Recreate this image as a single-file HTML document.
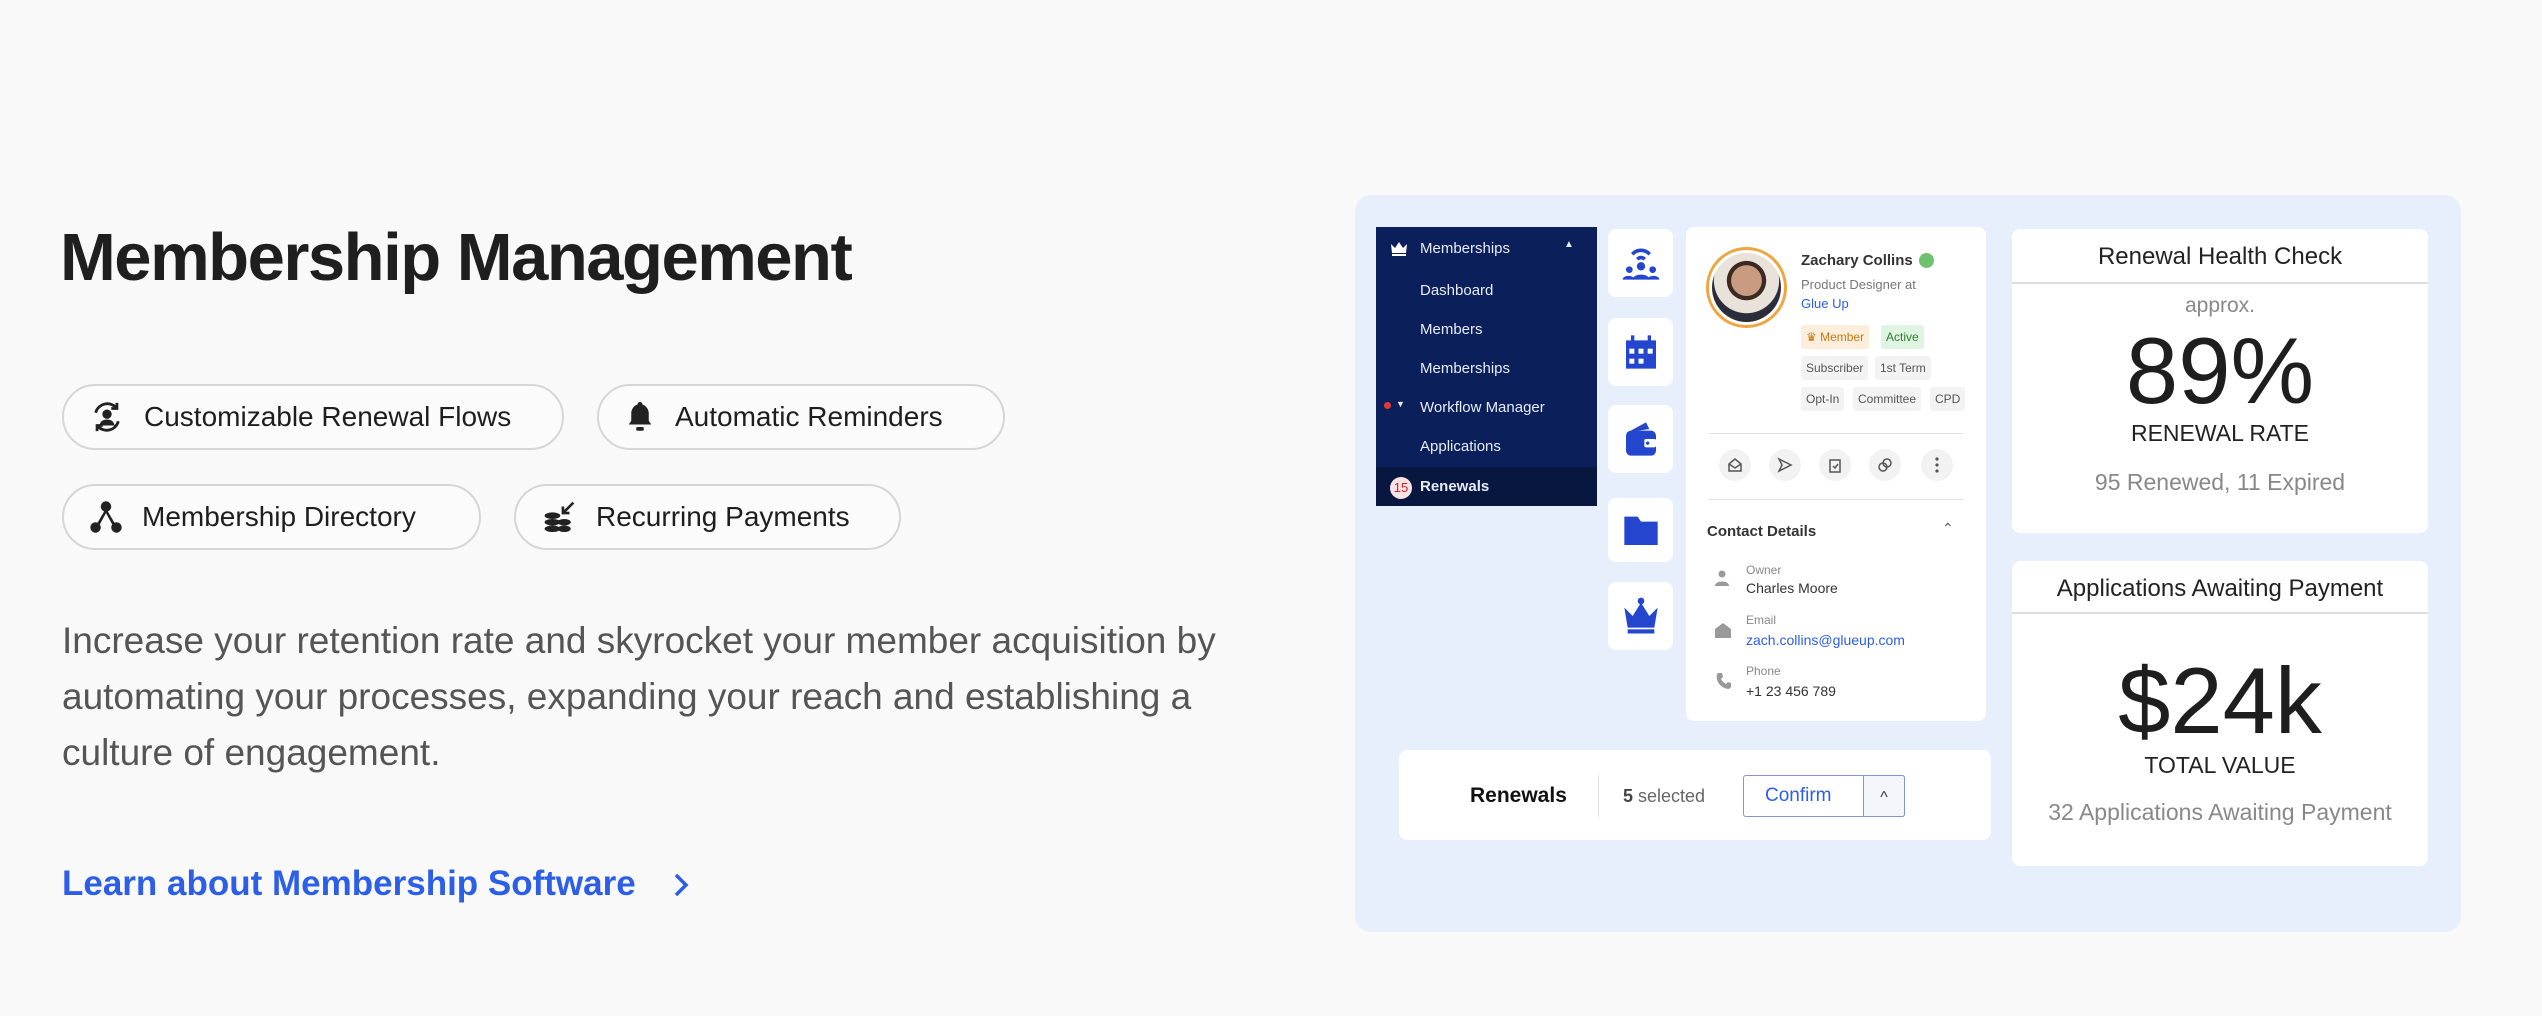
<!DOCTYPE html>
<html><head><meta charset="utf-8"><style>
*{margin:0;padding:0;box-sizing:border-box}
body{width:2542px;height:1016px;background:#f9f9f9;font-family:"Liberation Sans",sans-serif;position:relative;overflow:hidden;color:#222}
.a{position:absolute;white-space:nowrap}
.chip{position:absolute;height:66px;border:2px solid #d6d6d6;border-radius:33px;background:#fbfbfb;font-size:28px;color:#1e1e1e;display:flex;align-items:center;padding-left:26px}
.chip svg{margin-right:20px}
.panel{position:absolute;left:1355px;top:195px;width:1106px;height:737px;background:#e7eefc;border-radius:16px}
.side{position:absolute;left:1376px;top:227px;width:221px;height:279px;background:#0b1f5a}
.side div{position:absolute;left:44px;color:#e8ecf7;font-size:15px}
.tile{position:absolute;left:1608px;width:65px;background:#fff;border-radius:8px;display:flex;align-items:center;justify-content:center}
.card{position:absolute;background:#fff;border-radius:8px}
.tag{position:absolute;height:24px;line-height:24px;font-size:12px;padding:0 5px;border-radius:3px;background:#f3f3f3;color:#555}
.act{position:absolute;top:449px;width:32px;height:32px;border-radius:16px;background:#f2f2f2;display:flex;align-items:center;justify-content:center}
.lbl{position:absolute;left:1746px;font-size:12px;color:#888}
.val{position:absolute;left:1746px;font-size:14px;color:#333}
.c{text-align:center;position:absolute;left:0;width:100%}
</style></head><body>

<div class="a" style="left:60px;top:219px;font-size:67px;font-weight:bold;letter-spacing:-1.5px;color:#1f1f1f">Membership Management</div>

<div class="chip" style="left:62px;top:384px;width:502px">
<svg width="34" height="34" viewBox="0 0 24 24" fill="none" stroke="#222" stroke-width="2"><path d="M4 9a8.5 8.5 0 0 1 15-3"/><path d="M20 15a8.5 8.5 0 0 1-15 3"/><path d="M19 2v4h-4M5 22v-4h4"/><circle cx="12" cy="10" r="2.3" fill="#222"/><path d="M8 17c1-3 7-3 8 0z" fill="#222"/></svg>Customizable Renewal Flows</div>
<div class="chip" style="left:597px;top:384px;width:408px">
<svg width="30" height="34" viewBox="0 0 24 26" fill="#222"><path d="M12 1a2 2 0 0 1 2 2c3 1 5 4 5 7v6l2 3H3l2-3v-6c0-3 2-6 5-7a2 2 0 0 1 2-2z"/><rect x="9" y="21" width="6" height="3" rx="1"/></svg>Automatic Reminders</div>
<div class="chip" style="left:62px;top:484px;width:419px">
<svg width="32" height="34" viewBox="0 0 24 26" fill="#222"><circle cx="12" cy="5" r="4"/><circle cx="4" cy="21" r="4"/><circle cx="20" cy="21" r="4"/><path d="M11 8 4 20l2 1 6-11 6 11 2-1-7-12z"/></svg>Membership Directory</div>
<div class="chip" style="left:514px;top:484px;width:387px">
<svg width="34" height="34" viewBox="0 0 26 26" fill="#222"><ellipse cx="8" cy="12" rx="6" ry="2.5"/><ellipse cx="8" cy="17" rx="6" ry="2.5"/><ellipse cx="8" cy="22" rx="6" ry="2.5"/><ellipse cx="17" cy="17" rx="5" ry="2.5"/><ellipse cx="17" cy="22" rx="5" ry="2.5"/><path d="M24 2 16 10M16 5v5h5" stroke="#222" stroke-width="2" fill="none"/></svg>Recurring Payments</div>

<div class="a" style="left:62px;top:613px;font-size:37px;line-height:56px;color:#555;white-space:normal;width:1300px">Increase your retention rate and skyrocket your member acquisition by<br>automating your processes, expanding your reach and establishing a<br>culture of engagement.</div>

<div class="a" style="left:62px;top:864px;font-size:35px;font-weight:bold;color:#2c5ee8">Learn about Membership Software</div>
<svg class="a" style="left:672px;top:872px" width="18" height="26" viewBox="0 0 18 26"><path d="M4 3l10 10-10 10" stroke="#2c5ee8" stroke-width="3.5" fill="none"/></svg>

<div class="panel"></div>

<div class="side">
<svg style="position:absolute;left:14px;top:14px" width="18" height="15" viewBox="0 0 18 15" fill="#fff"><path d="M1 3l4 4 4-6 4 6 4-4-1 9H2z"/><rect x="2" y="13" width="14" height="2"/></svg>
<div style="top:13px">Memberships</div>
<div style="left:188px;top:12px;font-size:10px">▲</div>
<div style="top:55px">Dashboard</div>
<div style="top:94px">Members</div>
<div style="top:133px">Memberships</div>
<div style="left:8px;top:175px;width:7px;height:7px;border-radius:4px;background:#e53935"></div>
<div style="left:20px;top:172px;font-size:9px">▼</div>
<div style="top:172px">Workflow Manager</div>
<div style="top:211px">Applications</div>
<div style="left:0;top:240px;width:221px;height:39px;background:#07173f"></div>
<div style="left:14px;top:250px;width:22px;height:22px;border-radius:11px;background:#fbe3e3;color:#c62828;font-size:13px;text-align:center;line-height:22px">15</div>
<div style="top:251px;font-weight:bold">Renewals</div>
</div>

<div class="tile" style="top:229px;height:68px"><svg width="40" height="40" viewBox="0 0 24 24" fill="#2446cf"><path d="M6 6a8 8 0 0 1 12 0l-1.5 1.5a6 6 0 0 0-9 0z"/><path d="M9 9a4 4 0 0 1 6 0l-1.5 1.5a2 2 0 0 0-3 0z"/><circle cx="12" cy="14" r="2.5"/><path d="M7 22c0-4 10-4 10 0z"/><circle cx="5" cy="16" r="2"/><circle cx="19" cy="16" r="2"/><path d="M1 22c0-3 7-3 7 0zM16 22c0-3 7-3 7 0z"/></svg></div>
<div class="tile" style="top:318px;height:68px"><svg width="40" height="40" viewBox="0 0 24 24" fill="#2446cf"><path d="M3 5h18v17H3z"/><rect x="6" y="2" width="2" height="5"/><rect x="16" y="2" width="2" height="5"/><g fill="#fff"><rect x="5" y="10" width="3" height="3"/><rect x="10.5" y="10" width="3" height="3"/><rect x="16" y="10" width="3" height="3"/><rect x="5" y="16" width="3" height="3"/><rect x="10.5" y="16" width="3" height="3"/></g></svg></div>
<div class="tile" style="top:405px;height:68px"><svg width="40" height="40" viewBox="0 0 24 24" fill="#2446cf"><path d="M4 8 15 2l2 4z"/><rect x="3" y="7" width="18" height="15" rx="3"/><rect x="14" y="12" width="7" height="5" rx="1" fill="#fff"/><circle cx="16" cy="14.5" r="1"/></svg></div>
<div class="tile" style="top:498px;height:64px"><svg width="40" height="40" viewBox="0 0 24 24" fill="#2446cf"><path d="M2 4h8l2 3h10v14H2z"/></svg></div>
<div class="tile" style="top:582px;height:68px"><svg width="40" height="40" viewBox="0 0 24 24" fill="#2446cf"><circle cx="12" cy="3" r="2"/><path d="M2 7l5 5 5-8 5 8 5-5-2 12H4z"/><rect x="4" y="20" width="16" height="2.5"/></svg></div>

<div class="card" style="left:1686px;top:227px;width:300px;height:494px">
<div style="position:absolute;left:20px;top:20px;width:81px;height:81px;border-radius:41px;border:3px solid #f0a640;background:#fff;padding:3px"><div style="width:100%;height:100%;border-radius:50%;background:radial-gradient(circle at 50% 40%,#c99c82 0 28%,#3a2a22 29% 36%,#e8e2da 37% 60%,#2b2d3a 61%)"></div></div>
<div class="a" style="left:115px;top:25px;font-size:15px;font-weight:bold;color:#333">Zachary Collins</div>
<div style="position:absolute;left:233px;top:26px;width:15px;height:15px;border-radius:8px;background:#6cc26e"></div>
<div class="a" style="left:115px;top:50px;font-size:13px;color:#777">Product Designer at</div>
<div class="a" style="left:115px;top:69px;font-size:13px;color:#2c5ee8">Glue Up</div>
<div class="tag" style="left:115px;top:98px;background:#fdeedb;color:#c47a14">♛ Member</div>
<div class="tag" style="left:195px;top:98px;background:#e0f4e2;color:#2e7d32">Active</div>
<div class="tag" style="left:115px;top:129px">Subscriber</div>
<div class="tag" style="left:189px;top:129px">1st Term</div>
<div class="tag" style="left:115px;top:160px">Opt-In</div>
<div class="tag" style="left:167px;top:160px">Committee</div>
<div class="tag" style="left:244px;top:160px">CPD</div>
<div style="position:absolute;left:22px;top:206px;width:256px;height:1px;background:#e4e4e4"></div>
<div style="position:absolute;left:22px;top:272px;width:256px;height:1px;background:#e4e4e4"></div>
<div class="a" style="left:21px;top:296px;font-size:15px;font-weight:bold;color:#333">Contact Details</div>
<div class="a" style="left:256px;top:293px;font-size:14px;color:#555">⌃</div>
</div>
<div class="act" style="left:1719px"><svg width="16" height="16" viewBox="0 0 16 16" fill="none" stroke="#555" stroke-width="1.5"><path d="M2 7l6-5 6 5v7H2z M2 7l6 4 6-4"/></svg></div>
<div class="act" style="left:1769px"><svg width="16" height="16" viewBox="0 0 16 16" fill="none" stroke="#555" stroke-width="1.5"><path d="M2 2l12 6-12 6 3-6z"/></svg></div>
<div class="act" style="left:1819px"><svg width="16" height="16" viewBox="0 0 16 16" fill="none" stroke="#555" stroke-width="1.5"><rect x="3" y="3" width="10" height="12"/><path d="M6 9l2 2 3-4"/></svg></div>
<div class="act" style="left:1869px"><svg width="16" height="16" viewBox="0 0 16 16" fill="none" stroke="#555" stroke-width="1.5"><circle cx="6" cy="10" r="4"/><circle cx="10" cy="6" r="4"/></svg></div>
<div class="act" style="left:1921px"><svg width="4" height="16" viewBox="0 0 4 16" fill="#555"><circle cx="2" cy="2" r="1.6"/><circle cx="2" cy="8" r="1.6"/><circle cx="2" cy="14" r="1.6"/></svg></div>

<svg class="a" style="left:1715px;top:570px" width="14" height="16" viewBox="0 0 14 16" fill="#999"><circle cx="7" cy="4" r="3.5"/><path d="M0 16c0-6 14-6 14 0z"/></svg>
<div class="lbl" style="top:563px">Owner</div><div class="val" style="top:580px">Charles Moore</div>
<svg class="a" style="left:1715px;top:622px" width="16" height="16" viewBox="0 0 16 16" fill="#999"><path d="M0 7l8-6 8 6v9H0z"/></svg>
<div class="lbl" style="top:613px">Email</div><div class="val" style="top:632px;color:#2c5ee8">zach.collins@glueup.com</div>
<svg class="a" style="left:1716px;top:673px" width="15" height="16" viewBox="0 0 15 16" fill="#999"><path d="M2 0h4l1 4-2 2c1 2 3 4 5 5l2-2 3 1v4l-2 2C6 16-1 9 1 1z"/></svg>
<div class="lbl" style="top:664px">Phone</div><div class="val" style="top:683px">+1 23 456 789</div>

<div class="card" style="left:1399px;top:750px;width:592px;height:90px"></div>
<div class="a" style="left:1470px;top:784px;font-size:21px;font-weight:bold;color:#111">Renewals</div>
<div class="a" style="left:1598px;top:775px;width:1px;height:42px;background:#e0e0e0"></div>
<div class="a" style="left:1623px;top:786px;font-size:18px;color:#666"><b style="color:#444">5</b> selected</div>
<div class="a" style="left:1743px;top:775px;width:162px;height:42px;border:1.5px solid #7f97c9;border-radius:3px;background:#fff"></div>
<div class="a" style="left:1863px;top:775px;width:42px;height:42px;border:1.5px solid #7f97c9;border-radius:0 3px 3px 0;background:#f3f5fb;text-align:center;font-size:16px;line-height:44px;color:#333">^</div>
<div class="a" style="left:1765px;top:785px;font-size:19px;color:#2c5ee8">Confirm</div>

<div class="card" style="left:2012px;top:229px;width:416px;height:304px">
<div class="c" style="top:14px;font-size:24px;color:#222">Renewal Health Check</div>
<div style="position:absolute;left:0;top:53px;width:100%;height:2px;background:#ddd"></div>
<div class="c" style="top:65px;font-size:21px;color:#888">approx.</div>
<div class="c" style="top:88px;font-size:94px;color:#1e1e1e">89%</div>
<div class="c" style="top:191px;font-size:23px;color:#222">RENEWAL RATE</div>
<div class="c" style="top:240px;font-size:23px;color:#888">95 Renewed, 11 Expired</div>
</div>
<div class="card" style="left:2012px;top:561px;width:416px;height:305px">
<div class="c" style="top:14px;font-size:24px;color:#222">Applications Awaiting Payment</div>
<div style="position:absolute;left:0;top:51px;width:100%;height:2px;background:#ddd"></div>
<div class="c" style="top:86px;font-size:94px;color:#1e1e1e">$24k</div>
<div class="c" style="top:191px;font-size:23px;color:#222">TOTAL VALUE</div>
<div class="c" style="top:238px;font-size:23px;color:#888">32 Applications Awaiting Payment</div>
</div>

</body></html>
